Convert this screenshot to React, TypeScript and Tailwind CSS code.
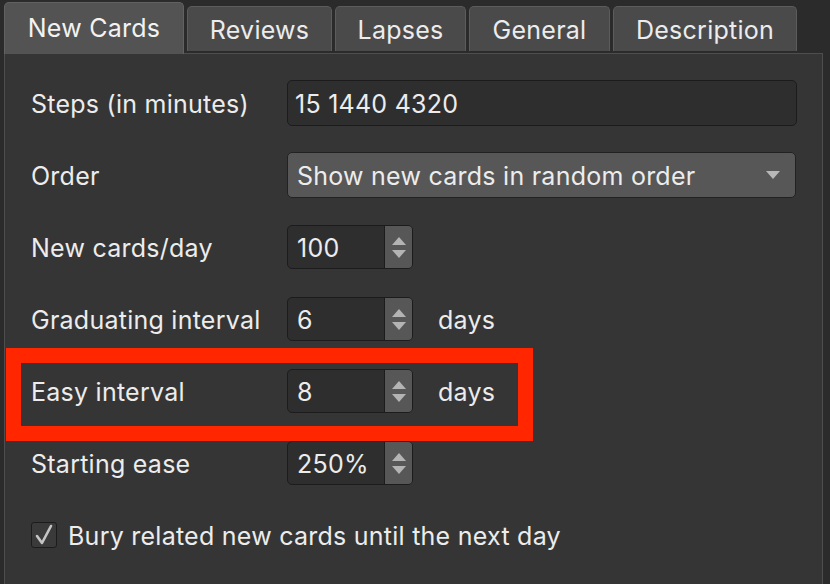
const tabs = ['New Cards', 'Reviews', 'Lapses', 'General', 'Description'];

const tabWidths: Record<string, string> = {
  'New Cards': 'w-[180px]',
  Reviews: 'w-[145px]',
  Lapses: 'w-[131px]',
  General: 'w-[141px]',
  Description: 'w-[184px]',
};

const Spin = ({ value }: { value: string }) => (
  <div className="flex h-[44px] w-[126px] overflow-hidden rounded-[5px] border border-[#1c1c1c] bg-[#2e2e2e]">
    <div className="flex flex-1 items-center pl-[9px] pt-[3px] text-[#ececec]">{value}</div>
    <div className="flex w-[28px] flex-col items-center justify-center gap-[5px] border-l border-[#1c1c1c] bg-[#575757]">
      <svg width="14" height="8" viewBox="0 0 14 8">
        <path d="M7 0 L14 8 L0 8 Z" fill="#b4b4b4" />
      </svg>
      <svg width="14" height="8" viewBox="0 0 14 8">
        <path d="M0 0 L14 0 L7 8 Z" fill="#b4b4b4" />
      </svg>
    </div>
  </div>
);

const Row = ({ label, children }: { label: string; children: React.ReactNode }) => (
  <div className="flex h-[46px] items-center">
    <div className="w-[256px] pt-[3px] text-[#ececec]">{label}</div>
    {children}
  </div>
);

export default function App() {
  return (
    <div
      className="relative h-[584px] w-[830px] overflow-hidden bg-[#2b2b2b] text-[25px] leading-none tracking-[0.25px]"
      style={{ fontFamily: 'Inter, "Open Sans", sans-serif' }}
    >
      {/* Tabs */}
      <div className="flex h-[54px] items-end gap-[3px] pl-[4px]">
        {tabs.map((t, i) =>
          i === 0 ? (
            <div
              key={t}
              className={`${tabWidths[t]} relative z-10 flex h-[52px] items-center justify-center rounded-t-[5px] border border-b-0 border-[#626262] bg-[#535353] text-[#f2f2f2]`}
            >
              {t}
            </div>
          ) : (
            <div
              key={t}
              className={`${tabWidths[t]} mb-[3px] flex h-[45px] items-center justify-center rounded-t-[5px] border border-b-0 border-[#5c5c5c] bg-[#4a4a4a] pt-[3px] text-[#ececec]`}
            >
              {t}
            </div>
          )
        )}
      </div>

      {/* Panel */}
      <div className="-mt-[1px] ml-[4px] h-[540px] w-[819px] border-x border-t border-[#4e4e4e] bg-[#353535] pl-[26px] pt-[26px]">
        <div className="flex flex-col gap-[26px]">
          <Row label="Steps (in minutes)">
            <div className="flex h-[46px] w-[510px] items-center rounded-[5px] border border-[#1c1c1c] bg-[#2e2e2e] pl-[7px] pt-[3px] text-[#ececec]">
              15 1440 4320
            </div>
          </Row>
          <Row label="Order">
            <div className="flex h-[46px] w-[509px] items-center justify-between rounded-[5px] border border-[#222] bg-[#575757] pl-[9px] pr-[15px] text-[#ececec]">
              <span className="pt-[3px]">Show new cards in random order</span>
              <svg width="14" height="8" viewBox="0 0 14 8">
                <path d="M0 0 L14 0 L7 8 Z" fill="#b8b8b8" />
              </svg>
            </div>
          </Row>
          <Row label="New cards/day">
            <Spin value="100" />
          </Row>
          <Row label="Graduating interval">
            <Spin value="6" />
            <span className="ml-[25px] pt-[3px] text-[#ececec]">days</span>
          </Row>
          <Row label="Easy interval">
            <Spin value="8" />
            <span className="ml-[25px] pt-[3px] text-[#ececec]">days</span>
          </Row>
          <Row label="Starting ease">
            <Spin value="250%" />
          </Row>
          <div className="flex h-[46px] items-center">
            <div className="flex h-[26px] w-[26px] items-center justify-center rounded-[3px] border border-[#1c1c1c] bg-[#3a3a3a]">
              <svg width="18" height="22" viewBox="0 0 18 22">
                <path d="M2 12 L7 19 L16 2" fill="none" stroke="#c4c4c4" strokeWidth="2.6" strokeLinecap="round" strokeLinejoin="round" />
              </svg>
            </div>
            <span className="ml-[11px] pt-[3px] text-[#ececec]">Bury related new cards until the next day</span>
          </div>
        </div>
      </div>

      {/* Annotation */}
      <div className="absolute left-[6px] top-[348px] h-[93px] w-[527px] border-[15px] border-[#ff2600]" />
    </div>
  );
}
